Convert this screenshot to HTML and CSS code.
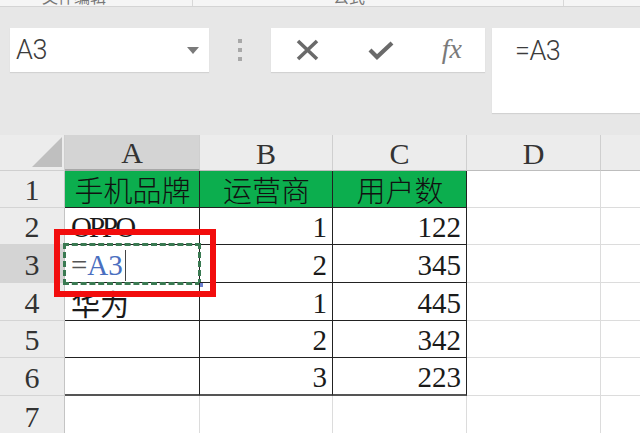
FILE: index.html
```html
<!DOCTYPE html>
<html lang="zh-CN">
<head>
<meta charset="utf-8">
<title>Excel</title>
<link rel="stylesheet" href="styles.css">
</head>
<body>
<div class="topstrip">
  <div class="seg seg1"><span class="cut">文件编辑</span></div>
  <div class="seg seg2"><span class="cut">公式</span></div>
  <div class="seg seg3"></div>
</div>

<div class="toolbar">
  <div class="namebox">
    <span class="nb-text">A3</span>
    <svg class="dd" width="12" height="8" viewBox="0 0 12 8"><path d="M0 0h12L6 7z" fill="#7a7a7a"/></svg>
  </div>
  <div class="grip">
    <span></span><span></span><span></span>
  </div>
  <div class="btnbox">
    <svg class="ico" width="26" height="22" viewBox="0 0 26 22"><path d="M3 2 L22 20 M22 2 L3 20" stroke="#6a6a6a" stroke-width="3.6" stroke-linecap="butt" fill="none"/></svg>
    <svg class="ico" width="26" height="20" viewBox="0 0 26 20"><path d="M2 10 L9 17 L24 3" stroke="#6a6a6a" stroke-width="4.2" fill="none"/></svg>
    <span class="fx">fx</span>
  </div>
  <div class="formula"><span class="f-text">=A3</span></div>
</div>

<div class="sheet">
  <div class="hd corner"><div class="tri"></div></div>
  <div class="hd col sel">A</div>
  <div class="hd col">B</div>
  <div class="hd col">C</div>
  <div class="hd col">D</div>
  <div class="hd col last"></div>

  <div class="hd row">1</div>
  <div class="c t g">手机品牌</div>
  <div class="c t g">运营商</div>
  <div class="c t g">用户数</div>
  <div class="c"></div>
  <div class="c last"></div>

  <div class="hd row">2</div>
  <div class="c t"><span class="oppo">OPPO</span></div>
  <div class="c t r">1</div>
  <div class="c t r">122</div>
  <div class="c"></div>
  <div class="c last"></div>

  <div class="hd row sel">3</div>
  <div class="c t active"><span class="eq">=</span><span class="ref">A3</span><span class="caret"></span></div>
  <div class="c t r">2</div>
  <div class="c t r">345</div>
  <div class="c"></div>
  <div class="c last"></div>

  <div class="hd row">4</div>
  <div class="c t">华为</div>
  <div class="c t r">1</div>
  <div class="c t r">445</div>
  <div class="c"></div>
  <div class="c last"></div>

  <div class="hd row">5</div>
  <div class="c t"></div>
  <div class="c t r">2</div>
  <div class="c t r">342</div>
  <div class="c"></div>
  <div class="c last"></div>

  <div class="hd row">6</div>
  <div class="c t b"></div>
  <div class="c t r b">3</div>
  <div class="c t r b">223</div>
  <div class="c"></div>
  <div class="c last"></div>

  <div class="hd row">7</div>
  <div class="c"></div>
  <div class="c"></div>
  <div class="c"></div>
  <div class="c"></div>
  <div class="c last"></div>

  <div class="redbox"></div>
</div>
</body>
</html>
```

FILE: styles.css
```css
html, body {
  margin: 0;
  padding: 0;
}
body {
  width: 640px;
  height: 433px;
  overflow: hidden;
  background: #e7e7e7;
  font-family: Roboto, "Noto Sans", sans-serif;
}

/* top cut-off ribbon strip */
.topstrip {
  display: flex;
  height: 6px;
  background: #f5f5f5;
  border-bottom: 1px solid #d4d4d4;
  overflow: hidden;
}
.seg {
  position: relative;
  overflow: hidden;
}
.seg1 { width: 192px; border-right: 1px solid #d8d8d8; }
.seg2 { width: 370px; border-right: 1px solid #d8d8d8; }
.seg3 { flex: 1; }
.cut {
  display: block;
  font-family: "Noto Sans CJK SC", sans-serif;
  font-size: 16px;
  line-height: 16px;
  color: #777;
  margin-top: -12px;
}
.seg1 .cut { padding-left: 42px; }
.seg2 .cut { padding-left: 140px; }

/* toolbar */
.toolbar {
  display: flex;
  align-items: flex-start;
  padding: 21px 0 0 10px;
  height: 107px;
  box-sizing: border-box;
}
.namebox {
  width: 199px;
  height: 44px;
  background: #fff;
  box-shadow: 0 1px 1px #d2d2d2;
  display: flex;
  align-items: center;
  justify-content: space-between;
  padding: 0 10px 0 6px;
  box-sizing: border-box;
}
.nb-text, .f-text {
  font-size: 27px;
  color: #3c3c3c;
  font-weight: 300;
  letter-spacing: -0.5px;
}
.dd { margin-top: 2px; }
.grip {
  width: 62px;
  height: 44px;
  display: flex;
  flex-direction: column;
  align-items: center;
  justify-content: center;
  gap: 5px;
}
.grip span {
  width: 4px;
  height: 4px;
  background: #a8a8a8;
}
.btnbox {
  width: 214px;
  height: 44px;
  background: #fff;
  box-shadow: 0 1px 1px #d2d2d2;
  display: flex;
  align-items: center;
  justify-content: space-between;
  padding: 0 23px 0 24px;
  box-sizing: border-box;
}
.fx {
  font-family: "Liberation Serif", serif;
  font-style: italic;
  font-size: 28px;
  color: #7a7a7a;
  margin-top: -3px;
}
.formula {
  margin-left: 7px;
  flex: 1;
  height: 85px;
  background: #fff;
  box-shadow: 0 1px 1px #d2d2d2;
  padding: 7px 0 0 23px;
  box-sizing: border-box;
}

/* sheet */
.sheet {
  position: relative;
  margin-top: 21px;
  display: grid;
  grid-template-columns: 65px 135px 133px 134px 134px 1fr;
  grid-template-rows: 36px 37px 37px 38px 38px 37px 38px 40px;
  background: #fff;
  font-family: "Liberation Serif", "Noto Sans CJK SC", serif;
  font-size: 29px;
  color: #1a1a1a;
}
.hd {
  background: #ececec;
  color: #333;
  display: flex;
  align-items: center;
  justify-content: center;
  box-sizing: border-box;
  border-right: 1px solid #cfcfcf;
  border-bottom: 1px solid #cfcfcf;
  font-size: 30px;
  padding-top: 2px;
}
.hd.col { border-bottom: 1px solid #bdbdbd; }
.hd.sel { background: #d4d4d4; }
.hd.col.sel { border-bottom: 2px solid #a8a8a8; }
.hd.row { border-right: 1px solid #c4c4c4; border-bottom: 1px solid #d4d4d4; }
.hd.last { border-right: none; }
.corner {
  position: relative;
  align-items: flex-end;
  justify-content: flex-end;
  padding: 0 2px 3px 0;
}
.tri {
  width: 0;
  height: 0;
  border-left: 30px solid transparent;
  border-bottom: 30px solid #bfbfbf;
}

.c {
  box-sizing: border-box;
  border-right: 1px solid #dcdcdc;
  border-bottom: 1px solid #dcdcdc;
  display: flex;
  align-items: center;
  padding: 3px 5px 0 6px;
  position: relative;
  white-space: nowrap;
}
.c.last { border-right: none; }
.c.t {
  border-right: 1px solid #222;
  border-bottom: 1px solid #222;
}
.c.b { border-bottom: 2px solid #555; }
.c.g {
  background: #0cae4e;
  justify-content: center;
  font-family: "Noto Sans CJK SC", sans-serif;
  font-weight: 300;
  color: #111;
  padding-top: 0;
}
.c.r { justify-content: flex-end; }
.oppo {
  letter-spacing: -3px;
}

/* active cell with copy marquee */
.active { color: #555; }
.active::before {
  content: "";
  position: absolute;
  left: -2px;
  top: -2px;
  right: -2px;
  bottom: -3px;
  border: 3px dashed #3a7a52;
  pointer-events: none;
}
.active::after {
  content: "";
  position: absolute;
  right: -4px;
  bottom: -5px;
  width: 4px;
  height: 4px;
  background: #6b7fd0;
}
.eq { color: #555; }
.ref { color: #4a6fc0; }
.caret {
  display: inline-block;
  width: 1px;
  height: 31px;
  background: #444;
  margin-left: 2px;
}

.redbox {
  position: absolute;
  left: 54px;
  top: 94px;
  width: 162px;
  height: 68px;
  box-sizing: border-box;
  border: 6px solid #f20d0d;
  pointer-events: none;
}
```
